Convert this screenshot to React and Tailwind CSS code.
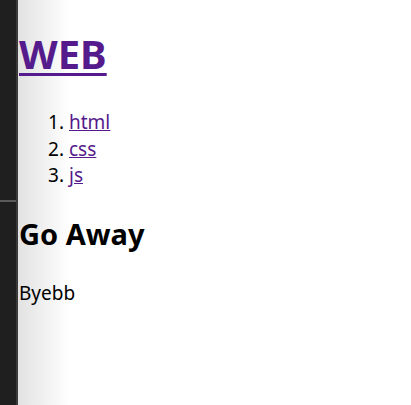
import React from 'react';

export default function App() {
  return (
    <div className="flex min-h-[405px] bg-white" style={{ fontFamily: '"Noto Sans", "Open Sans", sans-serif' }}>
      {/* left rail */}
      <div className="w-[18px] flex flex-col bg-[#1f1f1f] border-r-2 border-[#3a3a3a]">
        <div className="h-[202px] border-b-2 border-[#5a5a5a]" />
        <div className="flex-1" />
      </div>

      {/* page */}
      <div className="flex-1 pl-[1px] pt-[27px] bg-[linear-gradient(to_right,#e2e2e2,#ffffff_52px)] text-black">
        <h1 className="text-[40px] leading-[53px] font-bold">
          <a href="#" className="text-[#551a8b] underline decoration-[3px] underline-offset-[4px]">WEB</a>
        </h1>

        <ol className="list-decimal mt-[29px] pl-[50px] text-[19px] leading-[26.6px]">
          <li><a href="#" className="text-[#551a8b] underline">html</a></li>
          <li><a href="#" className="text-[#551a8b] underline">css</a></li>
          <li><a href="#" className="text-[#551a8b] underline">js</a></li>
        </ol>

        <h2 className="mt-[25px] text-[29px] leading-[40px] font-bold">Go Away</h2>

        <p className="mt-[26px] text-[19px] leading-[26.6px]">Byebb</p>
      </div>
    </div>
  );
}
